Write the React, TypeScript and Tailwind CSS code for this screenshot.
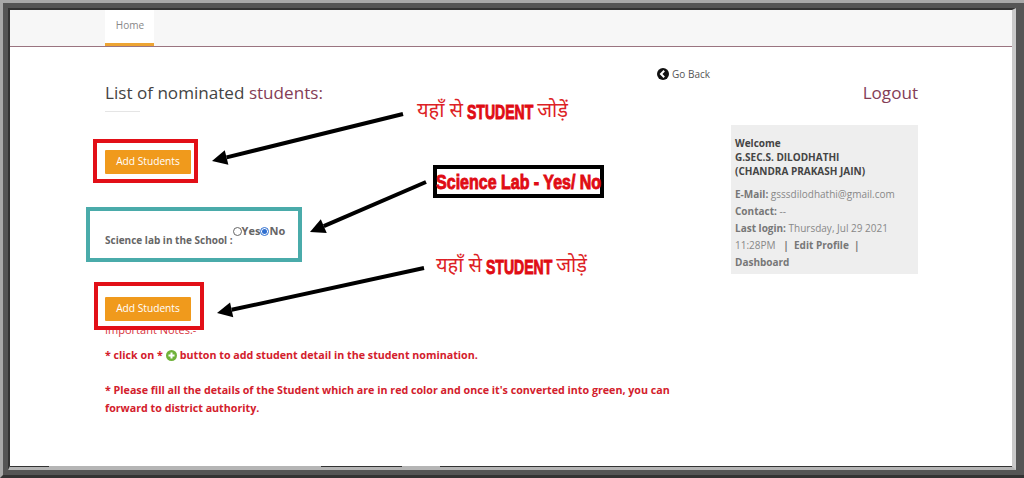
import React from "react";

const sans = "font-['Open_Sans',sans-serif]";

function AddButton() {
  return (
    <button className="block w-[86px] h-[24px] bg-[#f09a1c] text-white text-[10.2px] rounded-[1px]">Add Students</button>
  );
}

function Arrow({ x1, y1, x2, y2, w = 4 }: { x1: number; y1: number; x2: number; y2: number; w?: number }) {
  const a = Math.atan2(y1 - y2, x1 - x2);
  const L = 15;
  const H = 7.5;
  const bx = x2 + L * Math.cos(a);
  const by = y2 + L * Math.sin(a);
  const nx = -Math.sin(a) * H;
  const ny = Math.cos(a) * H;
  return (
    <g>
      <line x1={x1} y1={y1} x2={bx} y2={by} stroke="#000" strokeWidth={w} />
      <polygon points={`${x2},${y2} ${bx + nx},${by + ny} ${bx - nx},${by - ny}`} fill="#000" />
    </g>
  );
}

function HindiLabel({ className }: { className: string }) {
  return (
    <div className={`absolute flex items-center gap-[4px] whitespace-nowrap text-[#dd1f26] text-[20px] leading-[28px] font-['Noto_Sans_Devanagari','Noto_Sans',sans-serif] ${className}`}>
      <span>यहाँ से</span>
      <span className="inline-block w-[66px] origin-left scale-x-[0.72] font-['Liberation_Sans',sans-serif] font-bold text-[19.5px] text-[#e00c14] [-webkit-text-stroke:0.9px_#e00c14]">STUDENT</span>
      <span>जोड़ें</span>
    </div>
  );
}

export default function App() {
  return (
    <div className={`relative w-[1024px] h-[478px] overflow-hidden bg-[#4a4a4a] ${sans}`}>
      <div className="h-full border-t-[3px] border-l-[3px] border-b-[3px] border-t-[#a9a9a9] border-l-[#a9a9a9] border-b-[#333]">
        <div className="h-full border-t-[5px] border-l-[5px] border-r-[8px] border-b-[5px] border-t-[#555] border-l-[#555] border-r-[#555] border-b-[#555]">
          <div className="h-full border-t-2 border-l-2 border-r-[4px] border-b-[4px] border-t-[#333] border-l-[#333] border-r-[#c9c9c9] border-b-[#b5b5b5] bg-white flex flex-col">
            <nav className="h-[37px] shrink-0 bg-[#f7f7f7] border-b border-[#9a7480] pl-[95px] flex">
              <div className="w-[49px] h-[36px] bg-white border-b-[3px] border-[#eda433] text-[#888] text-[10px] text-center pl-px pt-[9px] leading-[13px]">Home</div>
            </nav>
            <main className="flex-1 flex pl-[95px]">
              <div className="w-[605px] shrink-0">
                <div className="flex justify-end pt-[20px] h-[34px]">
                  <span className="flex items-center gap-[3px] text-[10px] leading-[14px] text-[#555]">
                    <svg width="12" height="12" viewBox="0 0 12 12"><circle cx="6" cy="6" r="6" fill="#111" /><path d="M7.2 2.8 4 6l3.2 3.2" fill="none" stroke="#fff" strokeWidth="2" /></svg>
                    Go Back
                  </span>
                </div>
                <h2 className="text-[17.1px] leading-[24px] text-[#444]">List of nominated <span className="text-[#843d56]">students:</span></h2>
                <div className="w-[35px] h-px bg-[#e5e5e5] mt-[6px]" />
                <div className="mt-[38px]"><AddButton /></div>
                <div className="mt-[50px] flex items-start text-[10px] font-bold text-[#666] h-[20px]">
                  <span className="mt-[9px] leading-[14px]">Science lab in the School :</span>
                  <span className="flex items-center text-[11px] leading-[14px]">
                    <span className="w-[9px] h-[9px] rounded-full border border-[#666] bg-white" />
                    <span>Yes</span>
                    <span className="w-[9px] h-[9px] rounded-full border border-[#2f6fd0] bg-white flex items-center justify-center"><span className="w-[5px] h-[5px] rounded-full bg-[#2f6fd0]" /></span>
                    <span>No</span>
                  </span>
                </div>
                <div className="mt-[53px]"><AddButton /></div>
                <p className="mt-px text-[11px] leading-[15px] text-[#d8323c]">Important Notes:-</p>
                <div className="mt-[9px] text-[10.7px] font-bold leading-[18px] text-[#d3202c]">
                  <p className="flex items-center gap-[3px] h-[18px]">
                    <span>* click on *</span>
                    <svg width="11" height="11" viewBox="0 0 11 11"><circle cx="5.5" cy="5.5" r="5.5" fill="#6fb23a" /><path d="M5.5 2.5v6M2.5 5.5h6" stroke="#fff" strokeWidth="2" /></svg>
                    <span>button to add student detail in the student nomination.</span>
                  </p>
                  <p className="mt-[17px] w-[600px]">* Please fill all the details of the Student which are in red color and once it's converted into green, you can forward to district authority.</p>
                </div>
              </div>
              <aside className="ml-[21px] w-[187px] shrink-0 pt-[34px]">
                <div className="text-right text-[17.1px] leading-[24px] text-[#843d56]">Logout</div>
                <div className="mt-[20px] h-[149px] bg-[#eeeeee] px-[4px] pt-[11px] text-[10px]">
                  <div className="font-bold text-[#444] leading-[14px]">
                    Welcome<br />G.SEC.S. DILODHATHI<br />(CHANDRA PRAKASH JAIN)
                  </div>
                  <div className="mt-[8px] text-[#888] leading-[17px]">
                    <div><b className="text-[#777]">E-Mail:</b> gsssdilodhathi@gmail.com</div>
                    <div><b className="text-[#777]">Contact:</b> --</div>
                    <div><b className="text-[#777]">Last login:</b> Thursday, Jul 29 2021</div>
                    <div>11:28PM &nbsp; <b className="text-[#777]">| &nbsp;Edit Profile &nbsp;|</b></div>
                    <div><b className="text-[#777]">Dashboard</b></div>
                  </div>
                </div>
              </aside>
            </main>
          </div>
        </div>
      </div>

      <div className="absolute left-[10px] top-[466px] w-[39px] h-px bg-[#333]" />
      <div className="absolute left-[321px] top-[466px] w-[81px] h-px bg-[#333]" />
      <div className="absolute left-[440px] top-[466px] w-[572px] h-px bg-[#333]" />

      <div className="absolute left-[93px] top-[139px] w-[105px] h-[44px] border-[4px] border-[#e20f17]" />
      <div className="absolute left-[94px] top-[282px] w-[110px] h-[48px] border-[4px] border-[#e20f17]" />
      <div className="absolute left-[86px] top-[207px] w-[216px] h-[55px] border-[4px] border-[#4aabaa]" />
      <div className="absolute left-[433px] top-[165px] w-[171px] h-[33px] border-[4px] border-black bg-white flex items-center justify-center">
        <span className="whitespace-nowrap scale-x-[0.82] text-[19.5px] leading-[22px] font-bold text-[#e00c14] [-webkit-text-stroke:0.9px_#e00c14] font-['Liberation_Sans',sans-serif]">Science Lab - Yes/ No</span>
      </div>
      <HindiLabel className="left-[417px] top-[98px]" />
      <HindiLabel className="left-[436px] top-[253px]" />
      <svg className="absolute left-0 top-0 pointer-events-none" width="1024" height="478">
        <Arrow x1={403} y1={114} x2={212} y2={161} />
        <Arrow x1={426} y1={182} x2={310} y2={232} />
        <Arrow x1={424} y1={268} x2={217} y2={313} />
      </svg>
    </div>
  );
}
